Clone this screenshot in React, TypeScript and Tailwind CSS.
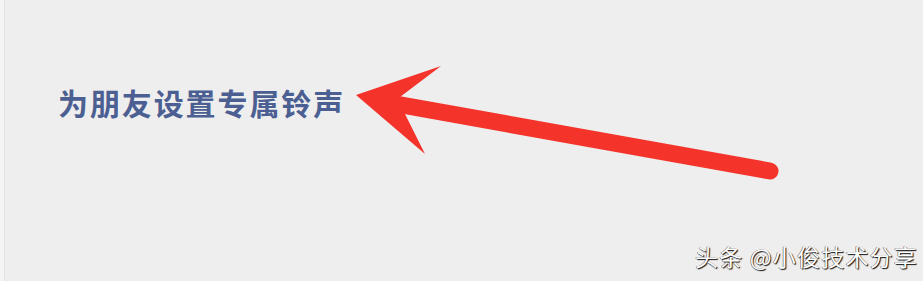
import React from "react";

const cjk = { fontFamily: '"Noto Sans CJK SC", "Noto Sans", sans-serif' };

function Arrow() {
  return (
    <svg
      className="absolute left-0 top-0 pointer-events-none"
      width={923}
      height={281}
      viewBox="0 0 923 281"
    >
      <line
        x1={392}
        y1={104}
        x2={766}
        y2={171}
        stroke="#f4342b"
        strokeWidth={17}
        strokeLinecap="round"
      />
      <path
        d="M352 95 L437 66 L396 97 L399 110 L421 154 Z"
        fill="#f4342b"
      />
    </svg>
  );
}

export default function App() {
  return (
    <div className="relative w-[923px] h-[281px] overflow-hidden bg-[#eeeeee] border-l-[4px] border-[#f4f4f4]">
      <div className="h-full border-l border-[#e2e2e2] pl-[53px] pt-[82px]">
        <h1
          className="text-[30px] leading-[40px] font-bold tracking-[1.9px] text-[#4c5f92]"
          style={cjk}
        >
          为朋友设置专属铃声
        </h1>
      </div>
      <Arrow />
      <div
        className="absolute right-[5px] bottom-[11px] text-[23px] leading-[28px] text-white tracking-[1.2px] [text-shadow:1px_1px_1px_#111,-0.5px_-0.5px_0.5px_#444]"
        style={cjk}
      >
        头条 @小俊技术分享
      </div>
    </div>
  );
}
